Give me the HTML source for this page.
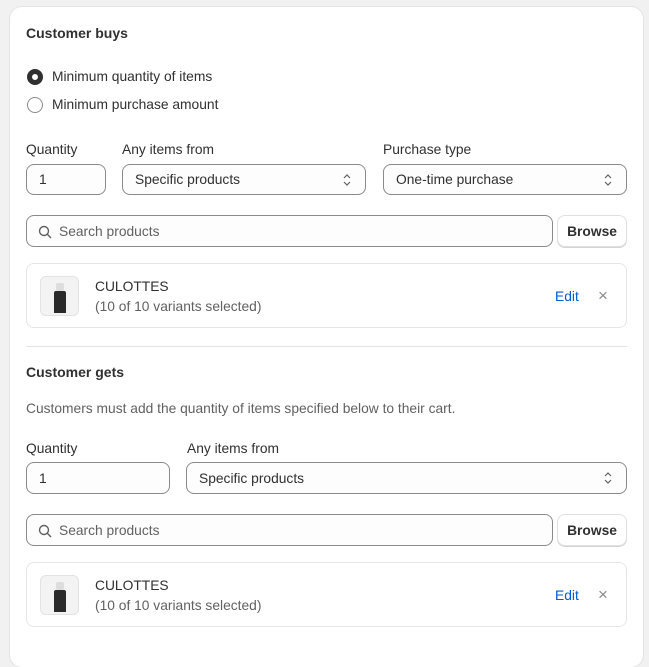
<!DOCTYPE html>
<html><head><style>
*{box-sizing:border-box;margin:0;padding:0}
body{width:649px;height:636px;background:#f1f1f1;font-family:"Liberation Sans",sans-serif;font-size:13.8px;color:#303030;position:relative;overflow:hidden}
.card{position:absolute;left:10px;top:7px;width:633px;height:660px;background:#fff;border-radius:12px;box-shadow:0 0 0 1px #e3e3e3}
.a{position:absolute;white-space:nowrap}
.h{font-weight:bold;font-size:14px;color:#303030}
.box{position:absolute;border:1px solid #8a8a8a;border-radius:8px;background:#fdfdfd;display:flex;align-items:center;padding-left:12px}
.box svg.ch{position:absolute;right:12px;top:8px}
.btn{position:absolute;border:1px solid #e0e0e0;border-radius:8px;background:#fff;display:flex;align-items:center;justify-content:center;font-weight:bold;box-shadow:0 1px 0 #d4d4d4}
.pc{position:absolute;left:26px;width:601px;height:65px;border:1px solid #e6e6e6;border-radius:8px}
.th{position:absolute;left:13px;top:12px;width:39px;height:40px;border:1px solid #e3e3e3;border-radius:6px;background:#f3f3f3;overflow:hidden}
.th i{position:absolute;left:15px;top:6px;width:8px;height:8px;background:#ddd;border-radius:2px}
.th b{position:absolute;left:13px;top:14px;width:12px;height:22px;background:#2a2a2a;border-radius:2px 2px 0 0}
</style></head><body>
<div class="card"></div>
<div class="a h" style="left:26px;top:25px">Customer buys</div>
<div class="a" style="left:27px;top:69px;width:16px;height:16px;border-radius:50%;border:5px solid #303030"></div>
<div class="a" style="left:52px;top:69px">Minimum quantity of items</div>
<div class="a" style="left:27px;top:97px;width:16px;height:16px;border-radius:50%;border:1px solid #8a8a8a"></div>
<div class="a" style="left:52px;top:97px">Minimum purchase amount</div>

<div class="a" style="left:26px;top:142px">Quantity</div>
<div class="a" style="left:122px;top:142px">Any items from</div>
<div class="a" style="left:383px;top:142px">Purchase type</div>
<div class="box" style="left:26px;top:164px;width:80px;height:31px">1</div>
<div class="box" style="left:122px;top:164px;width:244px;height:31px">Specific products<svg class="ch" width="12" height="14"><path d="M3 5l3-3 3 3M3 9l3 3 3-3" fill="none" stroke="#616161" stroke-width="1.2"/></svg></div>
<div class="box" style="left:383px;top:164px;width:244px;height:31px">One-time purchase<svg class="ch" width="12" height="14"><path d="M3 5l3-3 3 3M3 9l3 3 3-3" fill="none" stroke="#616161" stroke-width="1.2"/></svg></div>

<div class="box" style="left:26px;top:215px;width:527px;height:32px;padding-left:32px"><svg style="position:absolute;left:11px;top:9px" width="14" height="14"><circle cx="6" cy="6" r="4.5" fill="none" stroke="#616161" stroke-width="1.4"/><path d="M9.3 9.3L13 13" stroke="#616161" stroke-width="1.4"/></svg><span style="color:#616161">Search products</span></div>
<div class="btn" style="left:557px;top:215px;width:70px;height:32px">Browse</div>

<div class="pc" style="top:263px"><div class="th"><i></i><b></b></div>
<div class="a" style="left:68px;top:15px">CULOTTES</div>
<div class="a" style="left:68px;top:35px;color:#616161">(10 of 10 variants selected)</div>
<div class="a" style="left:528px;top:25px;color:#005bd3">Edit</div>
<div class="a" style="left:571px;top:22px;color:#8a8a8a;font-size:17px">×</div></div>

<div class="a" style="left:26px;top:346px;width:601px;height:1px;background:#e3e3e3"></div>
<div class="a h" style="left:26px;top:364px">Customer gets</div>
<div class="a" style="left:26px;top:401px;color:#616161">Customers must add the quantity of items specified below to their cart.</div>
<div class="a" style="left:26px;top:441px">Quantity</div>
<div class="a" style="left:187px;top:441px">Any items from</div>
<div class="box" style="left:26px;top:462px;width:144px;height:32px">1</div>
<div class="box" style="left:186px;top:462px;width:441px;height:32px">Specific products<svg class="ch" width="12" height="14"><path d="M3 5l3-3 3 3M3 9l3 3 3-3" fill="none" stroke="#616161" stroke-width="1.2"/></svg></div>

<div class="box" style="left:26px;top:514px;width:527px;height:32px;padding-left:32px"><svg style="position:absolute;left:11px;top:9px" width="14" height="14"><circle cx="6" cy="6" r="4.5" fill="none" stroke="#616161" stroke-width="1.4"/><path d="M9.3 9.3L13 13" stroke="#616161" stroke-width="1.4"/></svg><span style="color:#616161">Search products</span></div>
<div class="btn" style="left:557px;top:514px;width:70px;height:32px">Browse</div>

<div class="pc" style="top:562px"><div class="th"><i></i><b></b></div>
<div class="a" style="left:68px;top:15px">CULOTTES</div>
<div class="a" style="left:68px;top:35px;color:#616161">(10 of 10 variants selected)</div>
<div class="a" style="left:528px;top:25px;color:#005bd3">Edit</div>
<div class="a" style="left:571px;top:22px;color:#8a8a8a;font-size:17px">×</div></div>
</body></html>
